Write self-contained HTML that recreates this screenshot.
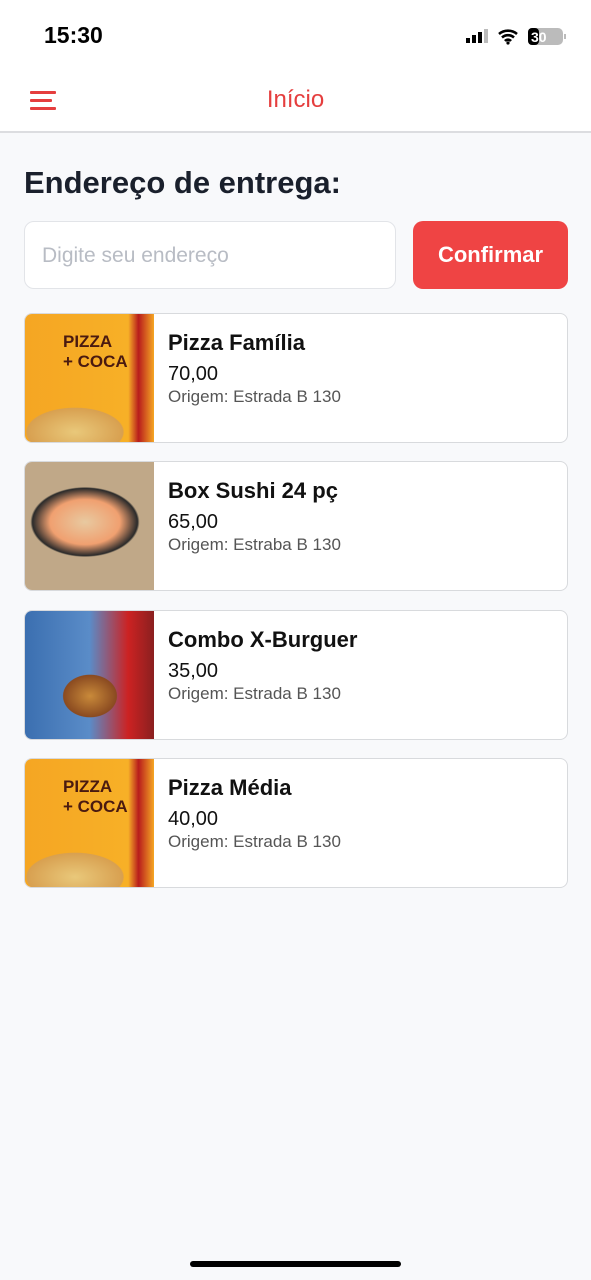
<!DOCTYPE html>
<html><head><meta charset="utf-8"><style>
body{margin:0;width:591px;height:1280px;background:#f8f9fb;font-family:"Liberation Sans",sans-serif;position:relative;overflow:hidden}
.top{position:absolute;left:0;top:0;width:591px;height:131px;background:#fff;border-bottom:2px solid #dcdde0}
.time{position:absolute;left:44px;top:22px;font-size:23px;font-weight:600;color:#000}
.title{position:absolute;left:0;width:591px;top:86px;text-align:center;color:#e53e3e;font-size:24px}
.burger{position:absolute;left:30px;top:91px;width:26px}
.burger div{height:3px;background:#e53e3e;margin-bottom:5px;border-radius:1px}
h1{position:absolute;left:24px;top:165px;margin:0;font-size:31px;font-weight:bold;color:#1a202c}
.inp{position:absolute;left:24px;top:221px;width:372px;height:68px;border:1px solid #e2e4e8;border-radius:10px;background:#fff;box-sizing:border-box;padding:22px 17px;color:#b8bcc4;font-size:21px}
.btn{position:absolute;left:413px;top:221px;width:155px;height:68px;background:#ef4444;border-radius:10px;color:#fff;font-size:22px;font-weight:bold;text-align:center;line-height:68px}
.card{position:absolute;left:24px;width:542px;height:128px;background:#fff;border:1px solid #d8dadd;border-radius:8px;overflow:hidden}
.img{position:absolute;left:0;top:0;width:129px;height:128px}
.n{position:absolute;left:143px;top:16px;font-size:22px;font-weight:bold;color:#111}
.p{position:absolute;left:143px;top:49px;font-size:20px;color:#111}
.o{position:absolute;left:143px;top:73px;font-size:17px;color:#555}
.pz{background:radial-gradient(ellipse 60px 30px at 50px 118px,#e9c87a 0,#d8a050 80%,transparent 82%),linear-gradient(90deg,#f5a623 0,#f7b027 80%,#b81c1c 88%,#f5a623 100%)}
.pz span{position:absolute;left:38px;top:18px;color:#4a1a10;font-weight:bold;font-size:17px;line-height:20px}
</style></head><body>
<div class="top">
<div class="time">15:30</div>
<svg style="position:absolute;left:466px;top:28px" width="100" height="18"><rect x="0" y="10" width="4" height="5" fill="#000"/><rect x="6" y="7" width="4" height="8" fill="#000"/><rect x="12" y="4" width="4" height="11" fill="#000"/><rect x="18" y="1" width="4" height="14" fill="#bbb"/>
<path d="M33 6a14 14 0 0 1 18 0M36 9.5a9 9 0 0 1 12 0M39 13a4 4 0 0 1 6 0" stroke="#000" stroke-width="2.6" fill="none"/><circle cx="42" cy="15" r="1.6" fill="#000"/>
<rect x="62" y="0" width="35" height="17" rx="5" fill="#bbb"/><rect x="62" y="0" width="11" height="17" rx="4" fill="#000"/><text x="65" y="14" font-size="14" font-weight="bold" fill="#fff" font-family="Liberation Sans">30</text><rect x="98" y="6" width="2" height="5" fill="#bbb"/></svg>
<div class="burger"><div></div><div style="width:22px"></div><div></div></div>
<div class="title">Início</div>
</div>
<h1>Endereço de entrega:</h1>
<div class="inp">Digite seu endereço</div>
<div class="btn">Confirmar</div>

<div class="card" style="top:313px"><div class="img pz"><span>PIZZA<br>+ COCA</span></div><div class="n">Pizza Família</div><div class="p">70,00</div><div class="o">Origem: Estrada B 130</div></div>
<div class="card" style="top:461px"><div class="img" style="background:radial-gradient(ellipse 70px 45px at 60px 60px,#e8c9a0 0,#f0a070 50%,#2a2a2a 75%,#c0a888 78%)"></div><div class="n">Box Sushi 24 pç</div><div class="p">65,00</div><div class="o">Origem: Estraba B 130</div></div>
<div class="card" style="top:610px"><div class="img" style="background:radial-gradient(ellipse 38px 30px at 65px 85px,#c98a3a 0,#8a4a20 70%,transparent 72%),linear-gradient(90deg,#3b6fb0 0,#5a8cc8 50%,#c22 80%,#8a2020 100%)"></div><div class="n">Combo X-Burguer</div><div class="p">35,00</div><div class="o">Origem: Estrada B 130</div></div>
<div class="card" style="top:758px"><div class="img pz"><span>PIZZA<br>+ COCA</span></div><div class="n">Pizza Média</div><div class="p">40,00</div><div class="o">Origem: Estrada B 130</div></div>

<div style="position:absolute;left:190px;top:1261px;width:211px;height:6px;border-radius:3px;background:#000"></div>
</body></html>
